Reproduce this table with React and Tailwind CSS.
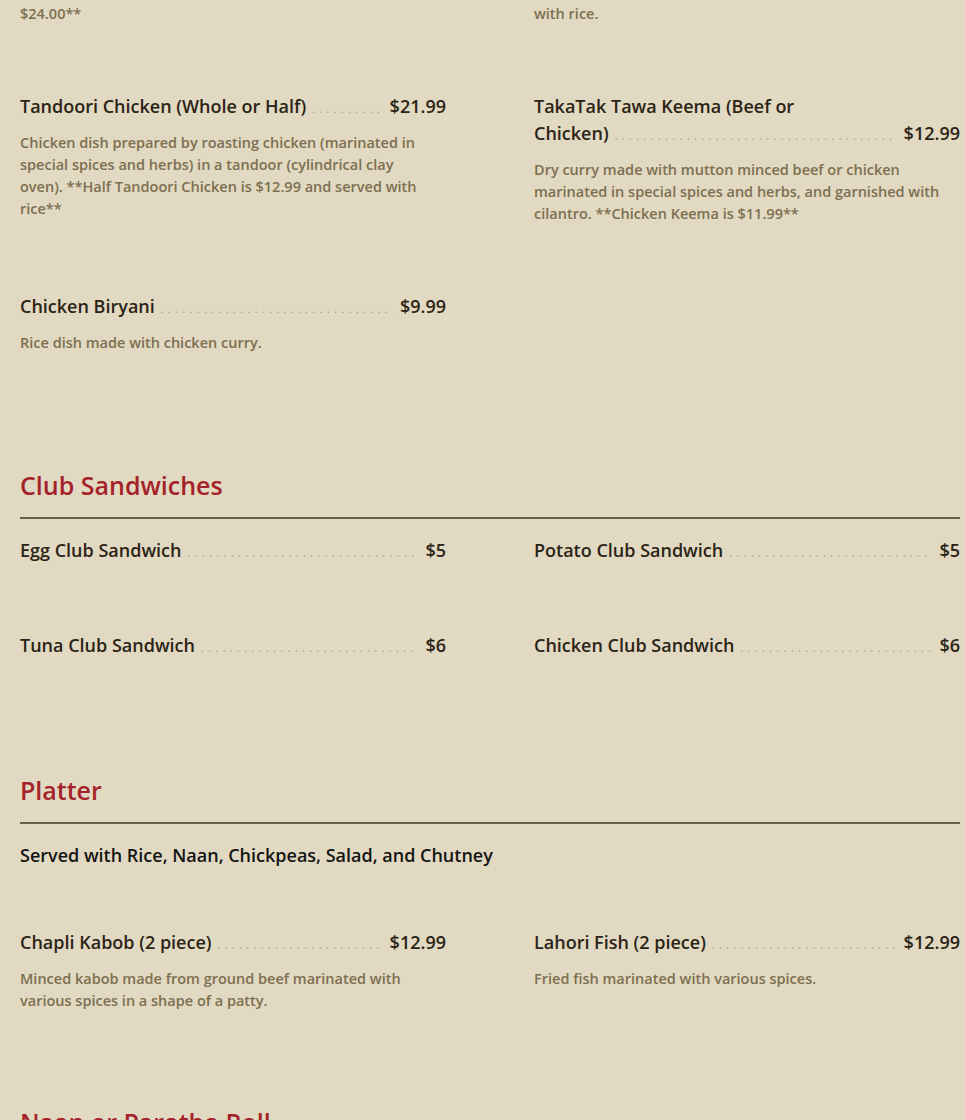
// Menu page — sections with dotted price leaders
const DOTS = ".".repeat(160);

const sections = [
  {
    name: "Club Sandwiches",
    items: [
      { title: ["Egg Club Sandwich"], price: "$5" },
      { title: ["Potato Club Sandwich"], price: "$5" },
      { title: ["Tuna Club Sandwich"], price: "$6" },
      { title: ["Chicken Club Sandwich"], price: "$6" },
    ],
  },
  {
    name: "Platter",
    note: "Served with Rice, Naan, Chickpeas, Salad, and Chutney",
    items: [
      {
        title: ["Chapli Kabob (2 piece)"],
        price: "$12.99",
        desc: "Minced kabob made from ground beef marinated with various spices in a shape of a patty.",
      },
      {
        title: ["Lahori Fish (2 piece)"],
        price: "$12.99",
        desc: "Fried fish marinated with various spices.",
      },
    ],
  },
];

const topItems = [
  {
    title: ["Tandoori Chicken (Whole or Half)"],
    price: "$21.99",
    desc: "Chicken dish prepared by roasting chicken (marinated in special spices and herbs) in a tandoor (cylindrical clay oven). **Half Tandoori Chicken is $12.99 and served with rice**",
  },
  {
    title: ["TakaTak Tawa Keema (Beef or", "Chicken)"],
    price: "$12.99",
    desc: "Dry curry made with mutton minced beef or chicken marinated in special spices and herbs, and garnished with cilantro. **Chicken Keema is $11.99**",
  },
  {
    title: ["Chicken Biryani"],
    price: "$9.99",
    desc: "Rice dish made with chicken curry.",
  },
];

function MenuItem({ title, price, desc }) {
  const lines = title.slice(0, -1);
  const last = title[title.length - 1];
  return (
    <div className="mb-[68px]">
      <div className="text-[18px] leading-[27px] font-semibold text-[#2b2416]">
        {lines.map((l) => (
          <div key={l}>{l}</div>
        ))}
        <div className="flex items-start">
          <span className="shrink-0">{last}</span>
          <span className="flex-1 min-w-0 overflow-hidden whitespace-nowrap ml-[6px] mr-[7px] font-normal">
            <span className="text-[10px] leading-none tracking-[4.6px] text-[#9a8f78]">{DOTS}</span>
          </span>
          <span className="shrink-0">{price}</span>
        </div>
      </div>
      {desc && (
        <p className="mt-[12px] pr-[14px] text-[14.5px] leading-[22px] font-semibold text-[#7d6f50]">
          {desc}
        </p>
      )}
    </div>
  );
}

function SectionHead({ name, className = "" }) {
  return (
    <div className={className}>
      <h2 className="text-[25px] leading-[32px] font-semibold text-[#a4232a]">{name}</h2>
      <div className="mt-[16px] h-[2px] bg-[#6b5e47]" />
    </div>
  );
}

export default function App() {
  return (
    <div
      className="h-[1120px] overflow-hidden bg-[#e1d9c1] px-[20px] pt-[3px]"
      style={{ fontFamily: "'Open Sans', Lato, sans-serif" }}
    >
      <div className="w-[940px]">
        {/* tail of previous row */}
        <div className="grid grid-cols-2 gap-x-[88px] mb-[68px] text-[14.5px] leading-[22px] font-semibold text-[#7d6f50]">
          <p>$24.00**</p>
          <p>with rice.</p>
        </div>

        <div className="grid grid-cols-2 gap-x-[88px]">
          {topItems.map((it) => (
            <MenuItem key={it.title.join(" ")} {...it} />
          ))}
        </div>

        {sections.map((s) => (
          <div key={s.name} className="mt-[47px]">
            <SectionHead name={s.name} />
            <div className="pt-[18px]">
              {s.note && (
                <p className="mb-[60px] text-[18px] leading-[27px] font-semibold text-[#141414]">
                  {s.note}
                </p>
              )}
              <div className="grid grid-cols-2 gap-x-[88px]">
                {s.items.map((it) => (
                  <MenuItem key={it.title.join(" ")} {...it} />
                ))}
              </div>
            </div>
          </div>
        ))}

        <SectionHead name="Naan or Paratha Roll" className="mt-[26px]" />
      </div>
    </div>
  );
}
